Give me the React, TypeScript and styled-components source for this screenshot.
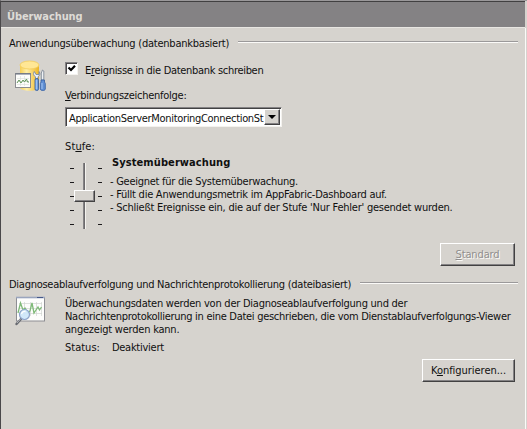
import React from "react";
import styled, { createGlobalStyle } from "styled-components";

const Global = createGlobalStyle`
  * { box-sizing: border-box; }
  body { margin: 0; overflow: hidden; background: #d6d3ce; }
`;

const Panel = styled.main`
  width: 527px;
  height: 429px;
  background: #d6d3ce;
  border-left: 1px solid #4a484a;
  border-top: 1px solid #9a989a;
  color: #101010;
  font: 11px/13px "DejaVu Sans Condensed", "DejaVu Sans", sans-serif;
  font-stretch: condensed;
  display: flex;
  flex-direction: column;
`;

const Text = styled.span<{ $track?: number; $bold?: boolean }>`
  display: block;
  flex: none;
  width: max-content;
  height: 13px;
  white-space: pre;
  letter-spacing: ${(p) => p.$track ?? 0}px;
  font-weight: ${(p) => (p.$bold ? 700 : 400)};
`;

const Key = styled.u`
  text-decoration-thickness: 1px;
  text-underline-offset: 1px;
  text-decoration-skip-ink: none;
`;

const TitleBar = styled.header`
  height: 27px;
  margin-right: 2px;
  padding: 8px 0 0 6px;
  color: #dedbd6;
  background: #848284;
  border-top: 1px solid #414041;
  border-bottom: 1px solid #e8e6e2;
`;

const Body = styled.div`
  flex: 1;
  margin-right: 1px;
  border-right: 1px solid #fbfaf8;
  padding: 9px 7px 0 8px;
`;

const SectionHead = styled.div`
  display: flex;
  gap: 9px;
  height: 13px;
`;

const Rule = styled.hr`
  flex: 1;
  height: 2px;
  margin: 4px 0 0;
  border: 0;
  border-top: 1px solid #9b999a;
  border-bottom: 1px solid #fbfaf8;
`;

const Section = styled.section<{ $height: number }>`
  display: grid;
  grid-template-columns: 56px 1fr;
  height: ${(p) => p.$height}px;
`;

const IconCell = styled.div<{ $top: number }>`
  padding: ${(p) => p.$top}px 0 0 5px;
  svg { display: block; }
`;

const CheckRow = styled.label`
  display: flex;
  gap: 7px;
  padding-top: 12px;
  height: 39px;
`;

const Box = styled.span`
  width: 13px;
  height: 13px;
  background: #fff;
  border: 1px solid;
  border-color: #848284 #f4f2ee #f4f2ee #848284;
  box-shadow: inset 1px 1px #4c4a4c;
  svg { display: block; }
`;

const CheckText = styled.div`
  padding-top: 2px;
`;

const Combo = styled.div`
  display: flex;
  justify-content: space-between;
  width: 217px;
  height: 20px;
  margin-top: 5px;
  padding: 1px;
  background: #fff;
  border: 1px solid;
  border-color: #848284 #f4f2ee #f4f2ee #848284;
  box-shadow: inset 1px 1px #424142;
`;

const ComboValue = styled.div`
  width: 197px;
  padding: 3px 0 0 2px;
`;

const Raised = `
  background: #d6d3ce;
  border: 1px solid;
  border-color: #fff #424142 #424142 #fff;
  box-shadow: inset -1px -1px #848284;
`;

const ComboButton = styled.span`
  width: 16px;
  height: 16px;
  display: grid;
  place-items: center;
  ${Raised}
`;

const StageLabel = styled.div`
  padding-top: 13px;
  height: 29px;
`;

const Stage = styled.div`
  display: flex;
`;

const Slider = styled.div`
  flex: none;
  width: 32px;
  height: 66px;
  margin: 7px 10px 0 5px;
  display: grid;
  grid-template-columns: 4px 1fr 4px;
`;

const Ticks = styled.div`
  display: flex;
  flex-direction: column;
  justify-content: space-between;
  padding: 5px 0 4px;
`;

const Tick = styled.i`
  height: 1px;
  background: #1c1a1c;
`;

const Track = styled.div`
  width: 3px;
  height: 66px;
  margin-left: 9px;
  padding-top: 27px;
  background: #6c6a6c;
  border-left: 1px solid #848284;
  border-right: 1px solid #f4f2ee;
`;

const Thumb = styled.div`
  width: 21px;
  height: 12px;
  margin-left: -10px;
  ${Raised}
`;

const StageLines = styled.div`
  margin: 6px 0 0 -2px;
`;

const Actions = styled.div`
  display: flex;
  justify-content: flex-end;
  padding-right: 3px;
`;

const Button = styled.button<{ $w: number; $off?: boolean }>`
  width: ${(p) => p.$w}px;
  height: 23px;
  padding: 0;
  display: flex;
  justify-content: center;
  align-items: center;
  font: inherit;
  ${Raised}
  color: ${(p) => (p.$off ? "#918f8d" : "#101010")};
  text-shadow: ${(p) => (p.$off ? "1px 1px #faf9f7" : "none")};
`;

const Divider = styled.div`
  height: 12px;
`;

const Paragraph = styled.div`
  padding-top: 6px;
`;

const Status = styled.div`
  display: flex;
  gap: 12px;
  padding-top: 5px;
`;

function DatabaseIcon() {
  return (
    <svg width="34" height="34" viewBox="0 0 34 34">
      <defs>
        <linearGradient id="gold">
          <stop offset="0" stopColor="#f6ce55" />
          <stop offset=".35" stopColor="#ffefa8" />
          <stop offset="1" stopColor="#edb524" />
        </linearGradient>
      </defs>
      <path d="M6 6v22c0 5 19 5 19 0V6z" fill="url(#gold)" />
      <ellipse cx="15.500" cy="6" rx="9.500" ry="4" fill="#ffe795" stroke="#f2cb58" strokeWidth=".8" />
      <rect x="1.500" y="14.500" width="15" height="14" fill="#fdfdfb" stroke="#8c8d91" />
      <path d="M1.500 15h15" stroke="#626a7c" />
      <path d="M3 19.500h12M3 22.500h12M3 25.500h12M6.500 17v10M10.500 17v10" stroke="#d8ddd8" strokeWidth=".6" />
      <path d="M3 24l2-3 2 3 2-3 1.500 2 2-3 1 3 1.500 0" fill="none" stroke="#64985d" />
      <path d="M20.300 12.500c-1.500 2.500-.5 4.500 1.200 5.200v2h2.500v-2c2-1 2.500-3.500 1-5.200v3h-3z" fill="#edf2f8" stroke="#7183a1" strokeWidth=".8" />
      <rect x="21" y="19.500" width="3.500" height="12" rx="1.600" fill="#6f9ee0" stroke="#31599d" strokeWidth=".8" />
      <path d="M28.500 11l1.300 1v9h-2.500v-7z" fill="#eef1f4" stroke="#747d8b" strokeWidth=".8" />
      <path d="M27 21h3.500v2l.8 1.500V30c0 2-5 2-5 0v-5.500L27 23z" fill="#608fd5" stroke="#345d9f" strokeWidth=".8" />
      <path d="M22.300 21v9M28 24v6" stroke="#b8d5fa" strokeWidth=".8" />
    </svg>
  );
}

function TraceIcon() {
  return (
    <svg width="34" height="32" viewBox="0 0 34 32">
      <rect x="2.500" y="2.500" width="28" height="23.500" fill="#fdfdfc" stroke="#8e8e93" />
      <path d="M2 2.500h29" stroke="#9aa5be" strokeWidth="1.600" />
      <path d="M23 2.500h6" stroke="#46598a" />
      <path d="M5 8.500h23M5 13.500h23M5 18.500h23M10.500 7v14M16.500 7v14M22.500 7v14M27.500 7v14" stroke="#d0d4d1" strokeWidth=".7" />
      <path d="M4 18l2.500-10 2.500 7 2-2 3 5 2-2 2-8 2 10 2-3 2-3 1.500 3 2-3" fill="none" stroke="#7fba78" strokeWidth="1.300" />
      <path d="M7 24l-4.500 5" stroke="#67696f" strokeWidth="2.400" strokeLinecap="round" />
      <path d="M6.500 24L3 28" stroke="#c8cbd1" strokeWidth=".8" />
      <circle cx="10.500" cy="19.500" r="5" fill="#cfe7fa" fillOpacity=".93" stroke="#8ea5ca" strokeWidth="1.200" />
      <path d="M7.500 19c.5-2 2-3 4-2.500" stroke="#fff" fill="none" strokeWidth="1.300" />
    </svg>
  );
}

const TickColumn = () => (
  <Ticks>
    {[0, 1, 2, 3, 4].map((n) => (
      <Tick key={n} />
    ))}
  </Ticks>
);

export default function App() {
  return (
    <>
      <Global />
      <Panel>
        <TitleBar>
          <Text $bold $track={-0.1}>Überwachung</Text>
        </TitleBar>
        <Body>
          <SectionHead>
            <Text $track={-0.23}>Anwendungsüberwachung (datenbankbasiert)</Text>
            <Rule />
          </SectionHead>
          <Section $height={193}>
            <IconCell $top={9}>
              <DatabaseIcon />
            </IconCell>
            <div>
              <CheckRow>
                <Box>
                  <svg width="11" height="11" viewBox="0 0 11 11">
                    <path d="M2.500 4.500l2.500 2.500L9 2.800" fill="none" stroke="#000" strokeWidth="2.200" />
                  </svg>
                </Box>
                <CheckText>
                  <Text $track={-0.31}>E<Key>r</Key>eignisse in die Datenbank schreiben</Text>
                </CheckText>
              </CheckRow>
              <Text $track={-0.26}><Key>V</Key>erbindungszeichenfolge:</Text>
              <Combo>
                <ComboValue>
                  <Text $track={-0.32}>ApplicationServerMonitoringConnectionSt</Text>
                </ComboValue>
                <ComboButton>
                  <svg width="8" height="4" viewBox="0 0 8 4">
                    <path d="M0 0h8L4 4z" />
                  </svg>
                </ComboButton>
              </Combo>
              <StageLabel>
                <Text $track={0.1}>St<Key>u</Key>fe:</Text>
              </StageLabel>
              <Stage>
                <Slider>
                  <TickColumn />
                  <Track>
                    <Thumb />
                  </Track>
                  <TickColumn />
                </Slider>
                <div>
                  <Text $bold $track={0.09}>Systemüberwachung</Text>
                  <StageLines>
                    <Text $track={-0.262}>- Geeignet für die Systemüberwachung.</Text>
                    <Text $track={-0.25}>- Füllt die Anwendungsmetrik im AppFabric-Dashboard auf.</Text>
                    <Text $track={-0.235}>- Schließt Ereignisse ein, die auf der Stufe 'Nur Fehler' gesendet wurden.</Text>
                  </StageLines>
                </div>
              </Stage>
            </div>
          </Section>
          <Actions>
            <Button $w={75} $off>
              <Text $track={-0.127}><Key>S</Key>tandard</Text>
            </Button>
          </Actions>
          <Divider />
          <SectionHead>
            <Text $track={-0.265}>Diagnoseablaufverfolgung und Nachrichtenprotokollierung (dateibasiert)</Text>
            <Rule />
          </SectionHead>
          <Section $height={68}>
            <IconCell $top={4}>
              <TraceIcon />
            </IconCell>
            <Paragraph>
              <Text $track={-0.245}>Überwachungsdaten werden von der Diagnoseablaufverfolgung und der</Text>
              <Text $track={-0.285}>Nachrichtenprotokollierung in eine Datei geschrieben, die vom Dienstablaufverfolgungs-Viewer</Text>
              <Text $track={-0.22}>angezeigt werden kann.</Text>
              <Status>
                <Text>Status:</Text>
                <Text $track={-0.253}>Deaktiviert</Text>
              </Status>
            </Paragraph>
          </Section>
          <Actions>
            <Button $w={93}>
              <Text $track={-0.037}>K<Key>o</Key>nfigurieren...</Text>
            </Button>
          </Actions>
        </Body>
      </Panel>
    </>
  );
}
